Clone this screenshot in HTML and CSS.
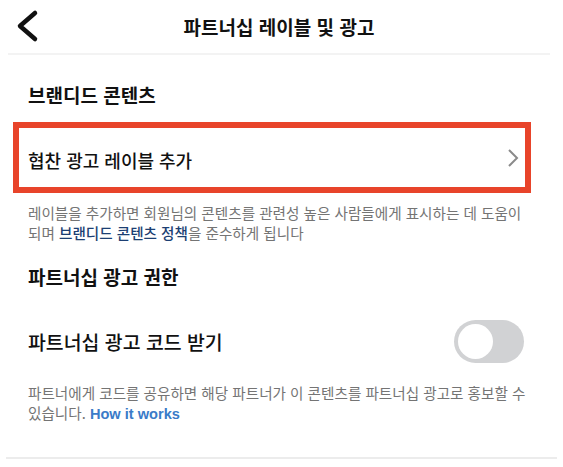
FILE: index.html
```html
<!DOCTYPE html>
<html lang="ko">
  <head>
    <meta charset="UTF-8" />
    <meta name="viewport" content="width=device-width, initial-scale=1.0" />
    <title>파트너십 레이블 및 광고</title>
    <link rel="stylesheet" href="styles.css">
  </head>
  <body>
    <div class="topbar">
      <svg class="back" width="40" height="53" viewBox="0 0 40 53">
        <polyline points="27,13 12,26 27,39" fill="none" stroke="#111" stroke-width="4.5" stroke-linecap="round" stroke-linejoin="round" />
      </svg>
      <div class="title">파트너십 레이블 및 광고</div>
      <div></div>
    </div>

    <h2 class="section-head first">브랜디드 콘텐츠</h2>

    <div class="row boxed">
      <span class="row-label small">협찬 광고 레이블 추가</span>
      <svg width="12" height="18" viewBox="0 0 12 18">
        <polyline points="2,1 10,9 2,17" fill="none" stroke="#8a8a8a" stroke-width="2" />
      </svg>
    </div>

    <p class="desc first-desc">
      레이블을 추가하면 회원님의 콘텐츠를 관련성 높은 사람들에게 표시하는 데 도움이<br />
      되며 <span class="policy">브랜디드 콘텐츠 정책</span>을 준수하게 됩니다
    </p>

    <h2 class="section-head second">파트너십 광고 권한</h2>

    <div class="row toggle-row">
      <span class="row-label">파트너십 광고 코드 받기</span>
      <div class="toggle"><div class="knob"></div></div>
    </div>

    <p class="desc second-desc">
      파트너에게 코드를 공유하면 해당 파트너가 이 콘텐츠를 파트너십 광고로 홍보할 수<br />
      있습니다. <span class="how">How it works</span>
    </p>

    <div class="bottom-line"></div>
  </body>
</html>
```

FILE: styles.css
```css
body {
  margin: 0;
  background: #fff;
  color: #111;
  font-family: "Noto Sans CJK KR", "Noto Sans", sans-serif;
}

.topbar {
  display: grid;
  grid-template-columns: 40px 1fr 40px;
  align-items: center;
  height: 53px;
  margin: 0 13px 0 8px;
  border-bottom: 2px solid #f3f3f3;
}

.back {
  display: block;
}

.title {
  text-align: center;
  font-size: 19px;
  font-weight: 700;
}

.section-head {
  margin: 0;
  padding: 0 28px;
  font-size: 19px;
  font-weight: 700;
  line-height: 24px;
}

.section-head.first {
  margin-top: 28px;
}

.section-head.second {
  margin-top: 21px;
  line-height: 26px;
}

.row {
  display: flex;
  align-items: center;
  justify-content: space-between;
}

.row-label {
  font-size: 19.4px;
  font-weight: 500;
}

.row-label.small {
  font-size: 18px;
  padding-top: 4px;
}

.boxed {
  height: 59px;
  margin: 15px 32px 0 13px;
  padding: 0 6px 0 9px;
  border: 6px solid #e8442a;
}

.desc {
  margin: 0;
  padding: 0 28px;
  font-size: 14.6px;
  line-height: 20px;
  color: #747474;
  white-space: nowrap;
}

.first-desc {
  margin-top: 10px;
}

.policy {
  color: #1c3f73;
  font-weight: 500;
}

.toggle-row {
  margin-top: 30px;
  padding: 0 39px 0 28px;
}

.toggle {
  display: flex;
  align-items: center;
  width: 70px;
  height: 43px;
  padding: 0 4px;
  box-sizing: border-box;
  border-radius: 22px;
  background: #d1d2d4;
}

.knob {
  width: 35px;
  height: 35px;
  border-radius: 50%;
  background: #fff;
}

.second-desc {
  margin-top: 20px;
}

.how {
  color: #3a7bc8;
  font-family: "Liberation Sans", Arial, sans-serif;
  font-weight: 700;
}

.bottom-line {
  margin: 33px 6px 0 6px;
  border-top: 2px solid #ececec;
}
```
